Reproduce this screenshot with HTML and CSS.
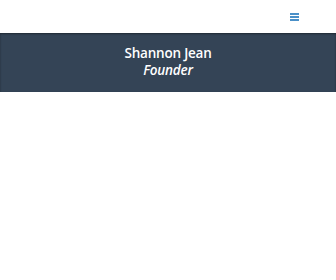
FILE: index.html
```html
<!DOCTYPE html>
<html>
<head>
<meta charset="utf-8">
<link rel="stylesheet" href="styles.css">
</head>
<body>
<header class="topbar">
  <button class="menu" aria-label="Menu">
    <svg width="9" height="8" viewBox="0 0 9 8"><rect y="0" width="9" height="2" fill="#4a90c8"/><rect y="3" width="9" height="2" fill="#4a90c8"/><rect y="6" width="9" height="2" fill="#4a90c8"/></svg>
  </button>
</header>
<section class="banner">
  <h1 class="name">Shannon Jean</h1>
  <p class="role">Founder</p>
</section>
</body>
</html>
```
FILE: styles.css
```css
html, body { margin: 0; padding: 0; background: #fff; }
body { font-family: "Open Sans", sans-serif; }
.topbar {
  height: 33px;
  display: flex;
  justify-content: flex-end;
  align-items: center;
  padding-right: 37px;
}
.menu {
  background: none;
  border: 0;
  padding: 0;
  display: flex;
}
.banner {
  background: #344456;
  height: 59px;
  box-sizing: border-box;
  padding-bottom: 2px;
  display: flex;
  flex-direction: column;
  align-items: center;
  justify-content: center;
  gap: 0;
  color: #fff;
  box-shadow: inset 0 1px 2px rgba(0,0,0,0.4);
}
.name {
  margin: 0;
  font-size: 13.5px;
  font-weight: 600;
  line-height: 17px;
  letter-spacing: -0.2px;
}
.role {
  margin: 0;
  font-size: 13.5px;
  font-weight: 600;
  font-style: italic;
  line-height: 17px;
  letter-spacing: -0.2px;
}
```
